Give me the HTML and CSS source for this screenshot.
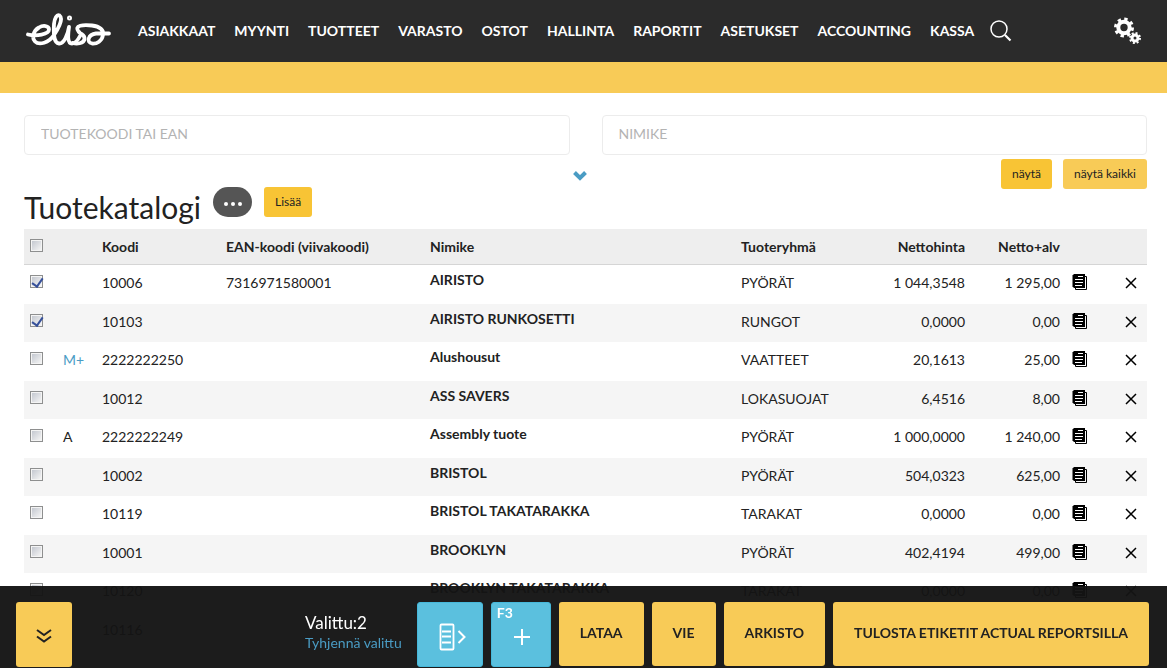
FILE: index.html
```
<!DOCTYPE html>
<html lang="fi">
<head>
<meta charset="utf-8">
<title>Tuotekatalogi</title>
<meta name="viewport" content="width=device-width, initial-scale=1">
<link rel="stylesheet" href="styles.css">
</head>
<body>
<svg class="sprite" aria-hidden="true">
  <symbol id="doc" viewBox="0 0 16 17">
    <path d="M2 0h11v14H2L.5 12.500V1.500z" fill="#000"/>
    <path d="M13 2.500h1.500v13H3.500V14" fill="none" stroke="#000" stroke-width="1"/>
    <path d="M6 2.500h5M3 5.500h8M3 8.500h8M3 11.500h7" stroke="#fff" fill="none"/>
  </symbol>
  <symbol id="cross" viewBox="0 0 12 12">
    <path d="M1 1l10 10M11 1L1 11" stroke="#000" stroke-width="1.500" fill="none"/>
  </symbol>
</svg>
<header class="topbar">
  <a class="logo" href="#" aria-label="elisa">
    <svg width="86" height="36" viewBox="0 0 86 36" fill="none" stroke="#fff" stroke-width="3.800" stroke-linecap="round" stroke-linejoin="round">
      <path d="M2 21.500C10 23.500 23 21.500 23 16.500C23 12.500 17 12 13 14.500C7 18 5.500 25 9 28.500C13 32.500 23 30 28 22C34 13 37 5 33.500 2.500C31 1 28.500 5 28 11C27.500 20 27.500 30 33 30.500C38 31 42 21 43 14C42 21 41 30.500 46 30.500C50 30.500 52 27 54 23"/>
      <path d="M53 19C56 22 59 22 58.500 26C58 31 50 31 47 30"/>
      <path d="M53 19C47 12 58 11.500 66 12.500C74 13.500 78 17 77 22C76 28 71 31 66 30.500C60 29.500 62 21.500 70 20.500H83"/>
      <circle cx="43.500" cy="5" r="1" stroke-width="3"/>
    </svg>
  </a>
  <nav class="menu">
    <a href="#">ASIAKKAAT</a>
    <a href="#">MYYNTI</a>
    <a href="#">TUOTTEET</a>
    <a href="#">VARASTO</a>
    <a href="#">OSTOT</a>
    <a href="#">HALLINTA</a>
    <a href="#">RAPORTIT</a>
    <a href="#">ASETUKSET</a>
    <a href="#">ACCOUNTING</a>
    <a href="#">KASSA</a>
  </nav>
  <button class="icon-button" type="button" aria-label="Haku">
    <svg width="22" height="22" viewBox="0 0 22 22" fill="none" stroke="#fff"><circle cx="9" cy="9" r="8" stroke-width="1.500"/><path d="M15 15l5.500 5.500" stroke-width="2.200"/></svg>
  </button>
  <button class="icon-button settings" type="button" aria-label="Asetukset">
    <svg width="28" height="28" viewBox="0 0 28 28" fill="none" stroke="#fff">
      <circle cx="10" cy="10.500" r="5.700" stroke-width="4"/>
      <circle cx="10" cy="10.500" r="8.500" stroke-width="3" stroke-dasharray="3.338 3.338"/>
      <circle cx="21" cy="21" r="3" stroke-width="3"/>
      <circle cx="21" cy="21" r="5" stroke-width="2" stroke-dasharray="1.963 1.963"/>
    </svg>
  </button>
</header>
<div class="band"></div>
<main class="page">
  <form class="search">
    <input class="field" type="text" aria-label="Tuotekoodi tai EAN" placeholder="TUOTEKOODI TAI EAN">
    <input class="field" type="text" aria-label="Nimike" placeholder="NIMIKE">
    <div class="search-actions">
      <button class="expand" type="button" aria-label="Lisää hakuehtoja">
        <svg width="14" height="10" viewBox="0 0 14 10"><path d="M1.500 1.500L7 7l5.500-5.500" fill="none" stroke="#4a9cc4" stroke-width="4"/></svg>
      </button>
      <button class="small strong" type="button">näytä</button>
      <button class="small" type="button">näytä kaikki</button>
    </div>
  </form>
  <div class="title-row">
    <h1>Tuotekatalogi</h1>
    <button class="more" type="button" aria-label="Toiminnot"><svg width="18" height="4" viewBox="0 0 18 4" fill="#fff"><circle cx="2" cy="2" r="2"/><circle cx="9" cy="2" r="2"/><circle cx="16" cy="2" r="2"/></svg></button>
    <button class="small strong" type="button">Lisää</button>
  </div>
  <table class="products">
    <colgroup><col class="c-check"><col class="c-flag"><col class="c-code"><col class="c-ean"><col><col class="c-group"><col class="c-net"><col class="c-gross"><col class="c-doc"><col class="c-del"></colgroup>
    <thead>
      <tr><th class="check"><input type="checkbox" aria-label="Valitse kaikki"></th><th></th><th>Koodi</th><th>EAN-koodi (viivakoodi)</th><th>Nimike</th><th>Tuoteryhmä</th><th class="num">Nettohinta</th><th class="num">Netto+alv</th><th></th><th></th></tr>
    </thead>
    <tbody>
      <tr><td class="check"><input type="checkbox" aria-label="10006" checked></td><td></td><td>10006</td><td>7316971580001</td><td class="name">AIRISTO</td><td>PYÖRÄT</td><td class="num">1 044,3548</td><td class="num">1 295,00</td><td class="act"><button aria-label="Tiedot"><svg width="16" height="17"><use href="#doc"/></svg></button></td><td class="act del"><button aria-label="Poista"><svg width="12" height="12"><use href="#cross"/></svg></button></td></tr>
      <tr><td class="check"><input type="checkbox" aria-label="10103" checked></td><td></td><td>10103</td><td></td><td class="name">AIRISTO RUNKOSETTI</td><td>RUNGOT</td><td class="num">0,0000</td><td class="num">0,00</td><td class="act"><button aria-label="Tiedot"><svg width="16" height="17"><use href="#doc"/></svg></button></td><td class="act del"><button aria-label="Poista"><svg width="12" height="12"><use href="#cross"/></svg></button></td></tr>
      <tr><td class="check"><input type="checkbox" aria-label="2222222250"></td><td><a href="#">M+</a></td><td>2222222250</td><td></td><td class="name">Alushousut</td><td>VAATTEET</td><td class="num">20,1613</td><td class="num">25,00</td><td class="act"><button aria-label="Tiedot"><svg width="16" height="17"><use href="#doc"/></svg></button></td><td class="act del"><button aria-label="Poista"><svg width="12" height="12"><use href="#cross"/></svg></button></td></tr>
      <tr><td class="check"><input type="checkbox" aria-label="10012"></td><td></td><td>10012</td><td></td><td class="name">ASS SAVERS</td><td>LOKASUOJAT</td><td class="num">6,4516</td><td class="num">8,00</td><td class="act"><button aria-label="Tiedot"><svg width="16" height="17"><use href="#doc"/></svg></button></td><td class="act del"><button aria-label="Poista"><svg width="12" height="12"><use href="#cross"/></svg></button></td></tr>
      <tr><td class="check"><input type="checkbox" aria-label="2222222249"></td><td>A</td><td>2222222249</td><td></td><td class="name">Assembly tuote</td><td>PYÖRÄT</td><td class="num">1 000,0000</td><td class="num">1 240,00</td><td class="act"><button aria-label="Tiedot"><svg width="16" height="17"><use href="#doc"/></svg></button></td><td class="act del"><button aria-label="Poista"><svg width="12" height="12"><use href="#cross"/></svg></button></td></tr>
      <tr><td class="check"><input type="checkbox" aria-label="10002"></td><td></td><td>10002</td><td></td><td class="name">BRISTOL</td><td>PYÖRÄT</td><td class="num">504,0323</td><td class="num">625,00</td><td class="act"><button aria-label="Tiedot"><svg width="16" height="17"><use href="#doc"/></svg></button></td><td class="act del"><button aria-label="Poista"><svg width="12" height="12"><use href="#cross"/></svg></button></td></tr>
      <tr><td class="check"><input type="checkbox" aria-label="10119"></td><td></td><td>10119</td><td></td><td class="name">BRISTOL TAKATARAKKA</td><td>TARAKAT</td><td class="num">0,0000</td><td class="num">0,00</td><td class="act"><button aria-label="Tiedot"><svg width="16" height="17"><use href="#doc"/></svg></button></td><td class="act del"><button aria-label="Poista"><svg width="12" height="12"><use href="#cross"/></svg></button></td></tr>
      <tr><td class="check"><input type="checkbox" aria-label="10001"></td><td></td><td>10001</td><td></td><td class="name">BROOKLYN</td><td>PYÖRÄT</td><td class="num">402,4194</td><td class="num">499,00</td><td class="act"><button aria-label="Tiedot"><svg width="16" height="17"><use href="#doc"/></svg></button></td><td class="act del"><button aria-label="Poista"><svg width="12" height="12"><use href="#cross"/></svg></button></td></tr>
      <tr><td class="check"><input type="checkbox" aria-label="10120"></td><td></td><td>10120</td><td></td><td class="name">BROOKLYN TAKATARAKKA</td><td>TARAKAT</td><td class="num">0,0000</td><td class="num">0,00</td><td class="act"><button aria-label="Tiedot"><svg width="16" height="17"><use href="#doc"/></svg></button></td><td class="act del"><button aria-label="Poista"><svg width="12" height="12"><use href="#cross"/></svg></button></td></tr>
      <tr><td class="check"></td><td></td><td>10116</td><td></td><td></td><td></td><td></td><td></td><td></td><td></td></tr>
    </tbody>
  </table>
</main>
<footer class="actions">
  <button class="tile collapse" type="button" aria-label="Piilota"><svg width="16" height="16" viewBox="0 0 16 16" fill="none" stroke="#222" stroke-width="2"><path d="M1 2l7 5 7-5M1 8.500l7 5 7-5"/></svg></button>
  <div class="selection"><span class="count">Valittu:2</span><a href="#">Tyhjennä valittu</a></div>
  <div class="tiles">
    <button class="tile blue export" type="button" aria-label="Siirrä"><svg width="28" height="28" viewBox="0 0 28 28" fill="none" stroke="#fff"><rect x="1.500" y="1.500" width="13" height="25" rx="1" stroke-width="1.800"/><path d="M3 8.500h9M3 13.500h9M3 19.500h9" stroke-width="1.800"/><path d="M19.500 8l6 6-6 6" stroke-width="2"/></svg></button>
    <button class="tile blue add" type="button" aria-label="F3 Lisää"><span class="key">F3</span><svg width="16" height="16" viewBox="0 0 16 16" stroke="#fff" stroke-width="2"><path d="M8 0v16M0 8h16"/></svg></button>
    <button class="tile" type="button">LATAA</button>
    <button class="tile" type="button">VIE</button>
    <button class="tile" type="button">ARKISTO</button>
    <button class="tile" type="button">TULOSTA ETIKETIT ACTUAL REPORTSILLA</button>
  </div>
</footer>
</body>
</html>
```
FILE: styles.css
```
* { box-sizing: border-box; }
html { scrollbar-width: none; }
body {
  margin: 0;
  font: 14px/20px Lato, "Open Sans", sans-serif;
  color: #222;
  background: #fff;
}
a { color: #4a9cc4; text-decoration: none; }
button { font: inherit; color: inherit; border: 0; padding: 0; background: none; cursor: pointer; }
svg { display: block; }
.sprite { position: absolute; width: 0; height: 0; }

.topbar {
  display: flex;
  align-items: center;
  height: 62px;
  padding: 0 25px 0 26px;
  background: #2b2b2b;
}
.logo { margin-right: 26px; }
.menu { display: flex; gap: 19px; margin-right: 16px; }
.menu a { color: #fff; font-weight: 700; white-space: nowrap; }
.settings { margin-left: auto; }
.band { height: 31px; background: #f8cb57; }

.page { padding: 22px 20px 90px 24px; }
.search { display: grid; grid-template-columns: 1fr 1fr; column-gap: 32px; row-gap: 4px; }
.field {
  width: 100%;
  height: 40px;
  padding: 0 16px 4px;
  font: inherit;
  border: 1px solid #ececec;
  border-radius: 4px;
  background: #fff;
}
.field::placeholder { color: #b3b3b3; opacity: 1; }
.search-actions { grid-column: 1 / -1; display: flex; justify-content: flex-end; gap: 11px; }
.expand { margin: 0 auto; padding: 4px 0 0 146px; }
.small {
  height: 30px;
  padding: 0 11px;
  font-size: 12px;
  border-radius: 3px;
  background: #f8cb57;
}
.strong { background: #f8c435; }

.title-row { display: flex; align-items: flex-start; height: 42px; margin-top: -2px; }
h1 { margin: 3px 12px 0 0; font-size: 30px; line-height: 34px; font-weight: 400; }
.more {
  display: grid;
  place-items: center;
  width: 39px;
  height: 30px;
  padding-top: 4px;
  margin-right: 12px;
  border-radius: 15px;
  background: #555;
}

.products { width: 100%; border-collapse: separate; border-spacing: 0; table-layout: fixed; }
.c-check { width: 33px; }
.c-flag { width: 39px; }
.c-code { width: 124px; }
.c-ean { width: 204px; }
.c-group { width: 140px; }
.c-net { width: 96px; }
.c-gross { width: 95px; }
.c-doc { width: 46px; }
.c-del { width: 35px; }
th, td { padding: 8px 6px 0; text-align: left; vertical-align: top; white-space: nowrap; }
th { height: 36px; background: #eee; border-bottom: 1px solid #d5d5d5; }
td { height: 39px; }
tbody tr:nth-child(even) td { height: 38px; background: #f5f5f5; }
.products .num { text-align: right; }
.products .name { padding-top: 5px; font-weight: 700; }
.products .act button { display: block; }
.products .act { padding-top: 9px; }
.products .del { padding: 12px 0 0 13px; }
.products .check { padding-top: 10px; }
input[type="checkbox"] {
  appearance: none;
  display: block;
  width: 13px;
  height: 13px;
  margin: 0;
  border: 1px solid #8e8f8f;
  background: linear-gradient(135deg, #c4c8d0, #f4f4f4) center / 9px 9px no-repeat #f4f4f4;
}
input[type="checkbox"]:checked::after {
  content: "";
  display: block;
  width: 5px;
  height: 9px;
  margin: 0 0 0 3px;
  border: solid #36509a;
  border-width: 0 2px 2px 0;
  transform: rotate(35deg);
}

.actions {
  position: fixed;
  inset: auto 0 0 0;
  display: flex;
  height: 82px;
  padding: 16px 18px 0 16px;
  background: rgba(20, 20, 20, 0.965);
}
.tile {
  display: grid;
  place-items: center;
  height: 64px;
  padding: 0 21px 2px;
  font-weight: 700;
  white-space: nowrap;
  border-radius: 3px;
  background: #f8cb57;
}
.collapse { width: 56px; height: 65px; padding: 3px 0 0; }
.selection { display: flex; flex-direction: column; margin: 11px 15px 0 auto; }
.count { color: #fff; font-size: 17px; }
.tiles { display: flex; gap: 8px; }
.blue { position: relative; height: 65px; background: #5bc0de; border: 1px solid #46b8da; }
.export { width: 66px; padding: 4px 0 0 6px; }
.add { width: 60px; padding: 4px 0 0 2px; }
.key { position: absolute; top: 0; left: 5px; color: #fff; }
```
